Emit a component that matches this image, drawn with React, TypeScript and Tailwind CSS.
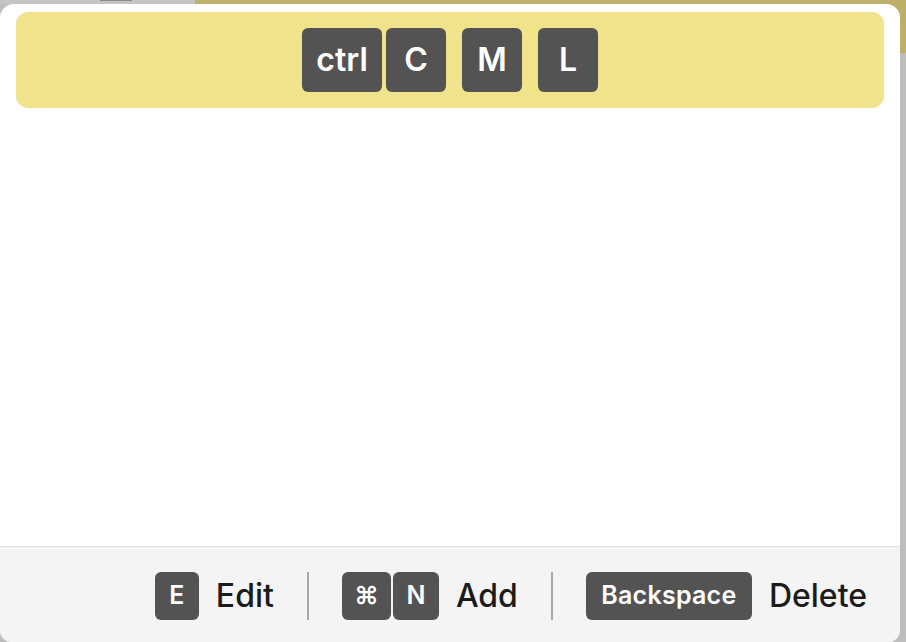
import React from 'react';

type KeyProps = { label: string; size: 'lg' | 'sm'; width: string };

// a single keycap
const Key: React.FC<KeyProps> = ({ label, size, width }) => {
  if (size === 'lg') {
    return (
      <div
        className={`h-[64px] ${width} rounded-[6px] bg-[#535353] text-white text-[32px] font-semibold flex items-center justify-center`}
      >
        {label}
      </div>
    );
  }
  return (
    <div
      className={`h-[48px] ${width} rounded-[6px] bg-[#535353] text-white text-[25px] font-semibold flex items-center justify-center`}
    >
      {label}
    </div>
  );
};

const Separator = () => <div className="w-[2px] h-[48px] bg-[#a4a7b1]" />;

export default function App() {
  const hints = [
    { keys: [{ k: 'E', w: 'w-[44px]' }], label: 'Edit' },
    {
      keys: [
        { k: '⌘', w: 'w-[49px]' },
        { k: 'N', w: 'w-[46px]' },
      ],
      label: 'Add',
    },
    { keys: [{ k: 'Backspace', w: 'w-[166px] tracking-[0.01em]' }], label: 'Delete' },
  ];

  return (
    <div
      className="relative w-[906px] h-[642px] overflow-hidden bg-[#bdbdbd]"
      style={{ fontFamily: 'Inter, "Noto Sans", sans-serif' }}
    >
      {/* window behind the panel */}
      <div className="absolute top-0 left-0 w-[195px] h-[4px] bg-[#c4c4c4]" />
      <div className="absolute top-0 left-[100px] w-[32px] h-[1px] bg-[#8c8c8c]" />
      <div className="absolute top-0 left-[195px] right-0 h-[53px] bg-[#bcb06a]" />

      {/* panel */}
      <div className="relative mt-[4px] w-[900px] h-[638px] bg-white rounded-t-[14px] rounded-b-[12px] overflow-hidden flex flex-col">
        <div className="mx-[16px] mt-[8px] h-[96px] rounded-[12px] bg-[#f1e38b] flex items-center justify-center gap-[16px]">
          <div className="flex gap-[4px]">
            <Key label="ctrl" size="lg" width="w-[80px]" />
            <Key label="C" size="lg" width="w-[60px]" />
          </div>
          <Key label="M" size="lg" width="w-[60px]" />
          <Key label="L" size="lg" width="w-[60px]" />
        </div>

        <div className="flex-1" />

        <div className="h-[96px] border-t border-[#e0e0e0] bg-[#f4f4f4] flex items-center justify-end gap-[33px] pr-[33px] pt-[2px]">
          {hints.map((h, i) => (
            <React.Fragment key={h.label}>
              {i > 0 && <Separator />}
              <div className="flex items-center gap-[17px]">
                <div className="flex gap-[2px]">
                  {h.keys.map((k) => (
                    <Key key={k.k} label={k.k} size="sm" width={k.w} />
                  ))}
                </div>
                <span className="text-[32px] font-medium text-[#1b1b1b]">{h.label}</span>
              </div>
            </React.Fragment>
          ))}
        </div>
      </div>
    </div>
  );
}
